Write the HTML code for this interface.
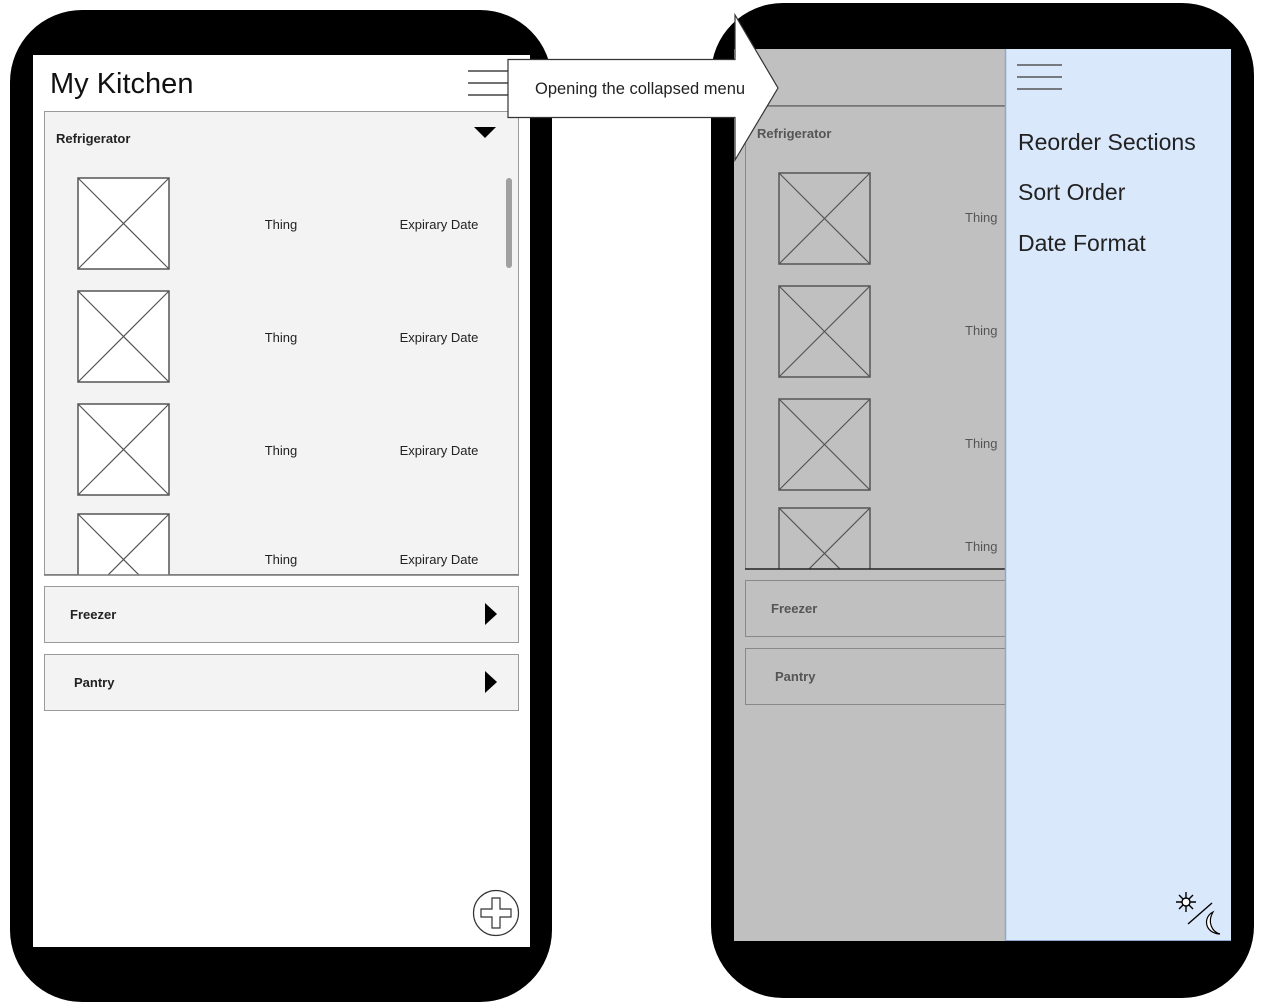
<!DOCTYPE html>
<html><head><meta charset="utf-8"><style>
html,body{margin:0;padding:0;background:#fff;width:1264px;height:1004px;overflow:hidden}
svg text{font-family:"Liberation Sans",Arial,sans-serif}
</style></head><body>
<svg width="1264" height="1004" viewBox="0 0 1264 1004" xmlns="http://www.w3.org/2000/svg">
<defs>
<clipPath id="cl1"><rect x="44" y="111" width="475" height="464"/></clipPath>
<clipPath id="cl2"><rect x="734" y="49" width="271" height="520"/></clipPath>
<g id="ximg"><rect x="0" y="0" width="91" height="91" fill="#fff" stroke="#555" stroke-width="1.5"/><path d="M0 0L91 91M91 0L0 91" stroke="#555" stroke-width="1.2"/></g>
<g id="ximg2"><rect x="0" y="0" width="91" height="91" fill="#c0c0c0" stroke="#555" stroke-width="1.5"/><path d="M0 0L91 91M91 0L0 91" stroke="#555" stroke-width="1.2"/></g>
</defs>

<!-- LEFT PHONE -->
<rect x="10" y="10" width="542" height="992" rx="72" fill="#000"/>
<rect x="33" y="55" width="497" height="892" fill="#fff"/>
<text x="50" y="93" font-size="29" fill="#111">My Kitchen</text>
<path d="M468 71H510M468 83H510M468 95H510" stroke="#444" stroke-width="1.5"/>
<rect x="44.5" y="111.5" width="474" height="463" fill="#f3f3f3" stroke="#9a9a9a"/>
<text x="56" y="143" font-size="13" font-weight="bold" fill="#222">Refrigerator</text>
<path d="M474 127H496L485 138Z" fill="#000"/>
<rect x="506" y="178" width="6" height="90" rx="3" fill="#a0a0a0"/>
<g clip-path="url(#cl1)">
<use href="#ximg" x="78" y="178"/>
<use href="#ximg" x="78" y="291"/>
<use href="#ximg" x="78" y="404"/>
<use href="#ximg" x="78" y="514"/>
</g>
<line x1="44" y1="575" x2="519" y2="575" stroke="#777" stroke-width="1.5"/>
<g font-size="13" fill="#222">
<text x="281" y="229" text-anchor="middle">Thing</text><text x="439" y="229" text-anchor="middle">Expirary Date</text>
<text x="281" y="342" text-anchor="middle">Thing</text><text x="439" y="342" text-anchor="middle">Expirary Date</text>
<text x="281" y="455" text-anchor="middle">Thing</text><text x="439" y="455" text-anchor="middle">Expirary Date</text>
<text x="281" y="564" text-anchor="middle">Thing</text><text x="439" y="564" text-anchor="middle">Expirary Date</text>
</g>
<rect x="44.5" y="586.5" width="474" height="56" fill="#f3f3f3" stroke="#9a9a9a"/>
<text x="70" y="619" font-size="13" font-weight="bold" fill="#222">Freezer</text>
<path d="M485 603L497 614L485 625Z" fill="#000"/>
<rect x="44.5" y="654.5" width="474" height="56" fill="#f3f3f3" stroke="#9a9a9a"/>
<text x="74" y="687" font-size="13" font-weight="bold" fill="#222">Pantry</text>
<path d="M485 671L497 682L485 693Z" fill="#000"/>
<circle cx="496" cy="913" r="22.5" fill="#fff" stroke="#333" stroke-width="1.2"/>
<path d="M492 898H500V909H511V917H500V928H492V917H481V909H492Z" fill="#fff" stroke="#333" stroke-width="1.2"/>

<!-- RIGHT PHONE -->
<rect x="711" y="3" width="543" height="995" rx="72" fill="#000"/>
<rect x="734" y="49" width="271" height="892" fill="#c0c0c0"/>
<line x1="734" y1="105.5" x2="1005" y2="105.5" stroke="#777"/>
<g clip-path="url(#cl2)">
<rect x="745.5" y="106.5" width="270" height="463" fill="#c0c0c0" stroke="#888"/>
<use href="#ximg2" x="779" y="173"/>
<use href="#ximg2" x="779" y="286"/>
<use href="#ximg2" x="779" y="399"/>
<use href="#ximg2" x="779" y="508"/>
</g>
<line x1="745" y1="569" x2="1005" y2="569" stroke="#222" stroke-width="1.5"/>
<text x="757" y="138" font-size="13" font-weight="bold" fill="#555">Refrigerator</text>
<g font-size="13" fill="#555">
<text x="965" y="222">Thing</text><text x="965" y="335">Thing</text><text x="965" y="448">Thing</text><text x="965" y="551">Thing</text>
</g>
<rect x="745.5" y="580.5" width="270" height="56" fill="#c0c0c0" stroke="#888"/>
<text x="771" y="613" font-size="13" font-weight="bold" fill="#555">Freezer</text>
<rect x="745.5" y="648.5" width="270" height="56" fill="#c0c0c0" stroke="#888"/>
<text x="775" y="681" font-size="13" font-weight="bold" fill="#555">Pantry</text>
<rect x="1005" y="49" width="226" height="892" fill="#dae8fc"/>
<line x1="1005.5" y1="49" x2="1005.5" y2="941" stroke="#8ea6c9" stroke-width="1.5"/>
<line x1="1005" y1="940.5" x2="1231" y2="940.5" stroke="#8ea6c9"/>
<path d="M1017 65H1062M1017 77H1062M1017 89H1062" stroke="#555" stroke-width="1.5"/>
<g font-size="23" fill="#222">
<text x="1018" y="150">Reorder Sections</text>
<text x="1018" y="200">Sort Order</text>
<text x="1018" y="251">Date Format</text>
</g>
<g stroke="#000" stroke-width="1.4">
<path d="M1186 892V912M1176 902H1196M1179 895L1193 909M1193 895L1179 909"/>
<circle cx="1186" cy="902" r="4" fill="#fff"/>
<line x1="1188" y1="924" x2="1212" y2="903"/>
</g>
<path d="M1213 912C1203 917 1204 933 1220 934C1212 932 1207 922 1213 912Z" fill="#fff" stroke="#000" stroke-width="1.2"/>

<!-- ARROW CALLOUT -->
<path d="M508 59.5H735V15L778 88L735 160V117.5H508Z" fill="#fff" stroke="#333" stroke-width="1.2"/>
<text x="535" y="94" font-size="16.5" fill="#222">Opening the collapsed menu</text>
</svg>
</body></html>
